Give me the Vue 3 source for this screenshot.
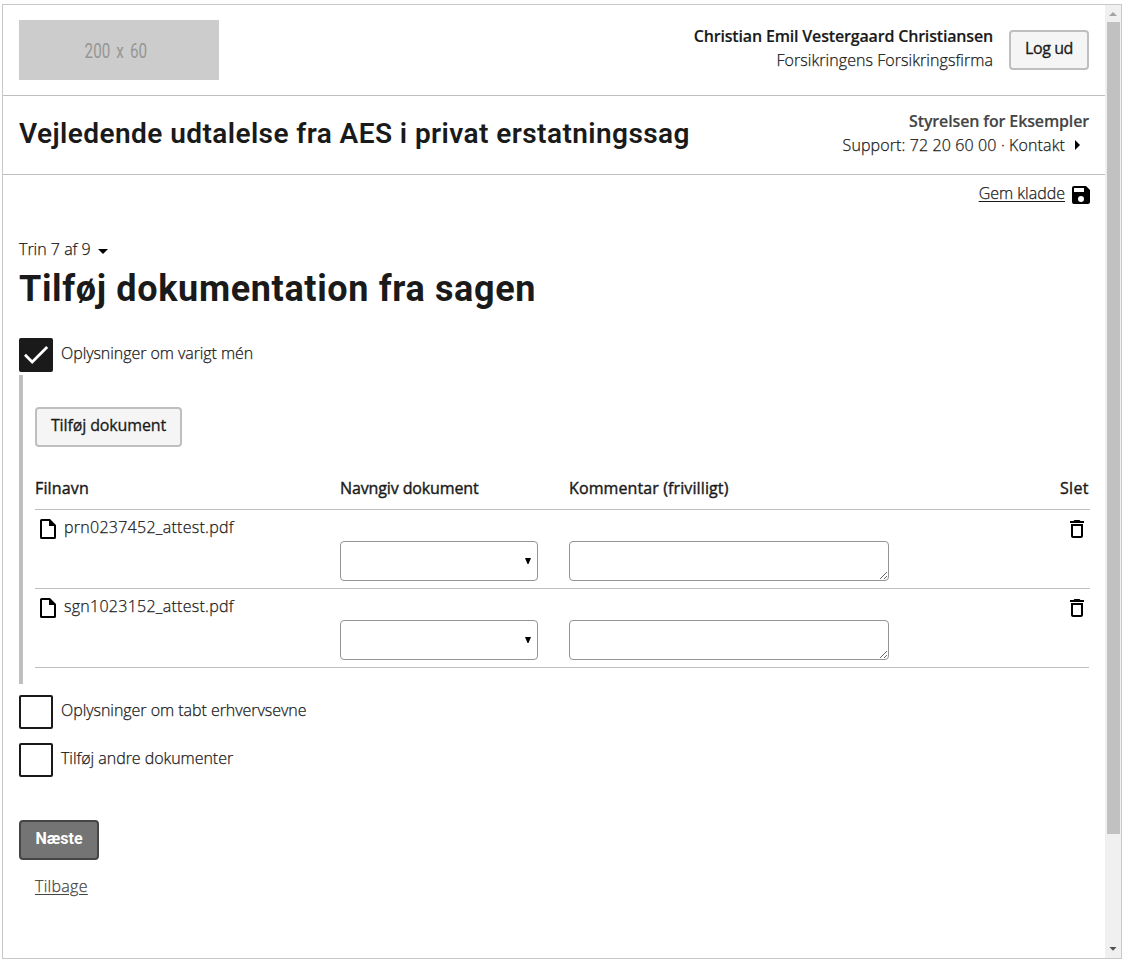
<script setup>
import { ref } from 'vue'

const files = ref([
  { name: 'prn0237452_attest.pdf', type: '', comment: '' },
  { name: 'sgn1023152_attest.pdf', type: '', comment: '' },
])
</script>

<template>
  <div class="window">
    <div class="page">
      <header class="top">
        <div class="logo"><span>200 x 60</span></div>
        <div class="user">
          <div class="name">Christian Emil Vestergaard Christiansen</div>
          <div class="firm">Forsikringens Forsikringsfirma</div>
        </div>
        <button class="btn logout" type="button">Log ud</button>
      </header>

      <div class="solution">
        <h2>Vejledende udtalelse fra AES i privat erstatningssag</h2>
        <div class="authority">
          <div class="agency">Styrelsen for Eksempler</div>
          <div class="support">
            <span>Support: 72 20 60 00 · Kontakt</span>
            <svg width="24" height="24" viewBox="0 0 24 24"><path d="M10 17l5-5-5-5z" /></svg>
          </div>
        </div>
      </div>

      <div class="draft">
        <a>Gem kladde</a>
        <svg width="24" height="24" viewBox="0 0 24 24"><path d="M17 3H5a2 2 0 0 0-2 2v14a2 2 0 0 0 2 2h14c1.1 0 2-.9 2-2V7l-4-4zm-5 16a3 3 0 1 1 0-6 3 3 0 0 1 0 6zm3-10H5V5h10v4z" /></svg>
      </div>

      <main>
        <div class="step">
          <span>Trin 7 af 9</span>
          <svg width="24" height="24" viewBox="0 0 24 24"><path d="M7 10l5 5 5-5z" /></svg>
        </div>
        <h1>Tilføj dokumentation fra sagen</h1>

        <div class="check">
          <span class="box checked">
            <svg width="34" height="34" viewBox="0 0 34 34"><path d="M6 16.8l7.2 7.2L28.2 9" fill="none" stroke="#fff" stroke-width="2.8" /></svg>
          </span>
          <span class="label varigt">Oplysninger om varigt mén</span>
        </div>

        <section class="panel">
          <button class="btn add" type="button">Tilføj dokument</button>
          <div class="table">
            <div class="row head">
              <span class="h-file">Filnavn</span>
              <span class="h-name">Navngiv dokument</span>
              <span class="h-comment">Kommentar (frivilligt)</span>
              <span class="h-del">Slet</span>
            </div>
            <div v-for="f in files" :key="f.name" class="row">
              <div class="file">
                <svg width="24" height="24" viewBox="0 0 24 24"><path fill-rule="evenodd" d="M14 2H5.6A1.6 1.6 0 0 0 4 3.600V20.400A1.600 1.600 0 0 0 5.600 22h12.800a1.600 1.600 0 0 0 1.600-1.600V8zM6 20V4h7v5h5v11z" /></svg>
                <span>{{ f.name }}</span>
              </div>
              <div class="select">
                <select v-model="f.type"><option value=""></option></select>
                <svg width="6" height="6" viewBox="0 0 6 6"><path d="M0 0h6L3.500 6h-1z" /></svg>
              </div>
              <textarea v-model="f.comment"></textarea>
              <svg class="trash" width="24" height="24" viewBox="0 0 24 24"><path fill-rule="evenodd" d="M6 19c0 1.100.9 2 2 2h8c1.100 0 2-.9 2-2V7H6zM8 9h8v10H8zm7.500-5l-1-1h-5l-1 1H5v2h14V4z" /></svg>
            </div>
          </div>
        </section>

        <div class="check second">
          <span class="box"></span><span class="label">Oplysninger om tabt erhvervsevne</span>
        </div>
        <div class="check third">
          <span class="box"></span><span class="label">Tilføj andre dokumenter</span>
        </div>

        <button class="btn next" type="button">Næste</button>
        <a class="back">Tilbage</a>
      </main>
    </div>
    <div class="scrollbar">
      <svg width="16" height="17" viewBox="0 0 16 17"><path d="M4 11h8L8 7z" fill="#a3a3a3" /></svg>
      <div class="thumb"></div>
      <svg class="down" width="16" height="17" viewBox="0 0 16 17"><path d="M4.500 6h7L8 9.800z" fill="#505050" /></svg>
    </div>
  </div>
</template>

<style>
body { background: #fff; overflow: hidden; }
</style>

<style scoped>
.window {
  box-sizing: border-box;
  width: 1120px;
  height: 955px;
  margin: 4px 0 0 2px;
  border: 1px solid #c8c8c8;
  display: flex;
  color: #1a1a1a;
  font: 300 16px/24px "Open Sans", "Noto Sans", sans-serif;
  -webkit-text-stroke: 0.25px currentColor;
}
.page { width: 1102px; }
svg { display: block; flex: none; }
.top {
  box-sizing: border-box;
  height: 91px;
  padding: 15px 16px 0;
  border-bottom: 1px solid #bfbfbf;
  display: flex;
  align-items: flex-start;
}
.logo {
  width: 200px;
  height: 60px;
  background: #ccc;
  color: #969696;
  display: flex;
  align-items: center;
  justify-content: center;
  font: 400 19.5px/24px Roboto, sans-serif;
  word-spacing: 3px;
  -webkit-text-stroke: 0;
}
.logo span { transform: scaleX(0.78); padding: 3px 7px 0 0; }
.user { margin-left: auto; padding-top: 4px; text-align: right; }
.name { font-weight: 600; letter-spacing: -0.17px; -webkit-text-stroke: 0.15px currentColor; }
.firm { letter-spacing: 0.06px; }
.btn {
  box-sizing: border-box;
  height: 40px;
  padding: 0 0 4px;
  border: 2px solid #bfbfbf;
  border-radius: 4px;
  background: #f5f5f5;
  color: #1a1a1a;
  font: 400 16px/24px "Open Sans", "Noto Sans", sans-serif;
  -webkit-text-stroke: 0.3px currentColor;
  white-space: nowrap;
  display: block;
}
.logout { width: 80px; margin: 10px 0 0 16px; letter-spacing: -0.4px; }
.solution {
  box-sizing: border-box;
  height: 79px;
  padding: 13px 16px 0 16px;
  border-bottom: 1px solid #bfbfbf;
  display: flex;
  justify-content: space-between;
}
h1, h2 { margin: 0; font-family: Roboto, sans-serif; white-space: nowrap; -webkit-text-stroke: 0; }
h2 { font-size: 28px; line-height: 36px; font-weight: 600; letter-spacing: 0.43px; padding-top: 7px; }
.authority { text-align: right; }
.agency { font-weight: 600; color: #454545; letter-spacing: -0.14px; -webkit-text-stroke: 0.15px currentColor; }
.support { display: flex; justify-content: flex-end; letter-spacing: 0.12px; }
.draft { display: flex; height: 32px; padding: 6px 12px 0 0; justify-content: flex-end; gap: 4px; }
.draft svg { margin-top: 2px; }
a { text-decoration: underline; text-underline-offset: 2px; }
main { padding: 24px 15px 0 16px; }
.step { display: flex; height: 24px; }
.step svg { margin-top: 2px; }
h1 { font-size: 36px; line-height: 48px; height: 77px; font-weight: 700; letter-spacing: 0.64px; padding-top: 4px; box-sizing: border-box; }
.check { display: flex; height: 34px; gap: 8px; }
.box { box-sizing: border-box; width: 34px; height: 34px; border: 2px solid #1a1a1a; border-radius: 2px; flex: none; }
.box.checked { background: #1a1a1a; border: 0; }
.label { padding-top: 3px; letter-spacing: -0.04px; }
.label.varigt { letter-spacing: -0.06px; }
.panel {
  box-sizing: border-box;
  height: 309px;
  margin-top: 3px;
  border-left: 4px solid #bfbfbf;
  padding: 32px 0 0 12px;
}
.add { width: 147px; letter-spacing: -0.12px; }
.row {
  box-sizing: border-box;
  height: 79px;
  border-bottom: 1px solid #bfbfbf;
  display: grid;
  grid-template-columns: 305px 229px 1fr 30px;
  align-items: start;
}
.row:last-child { margin-right: 1px; grid-template-columns: 305px 229px 1fr 29px; }
.row.head { height: 63px; padding-top: 29px; font-weight: 400; -webkit-text-stroke: 0.4px currentColor; }
.h-file { letter-spacing: 0.16px; }
.h-name { letter-spacing: -0.12px; }
.h-comment { letter-spacing: 0.11px; }
.h-del { letter-spacing: 0.3px; }
.file { display: flex; padding: 5px 0 0 1px; gap: 4px; letter-spacing: 0.27px; }
.file svg { margin-top: 2px; }
.select { position: relative; width: 198px; height: 40px; margin-top: 31px; }
select, textarea {
  box-sizing: border-box;
  height: 40px;
  margin: 0;
  border: 1px solid #949494;
  border-radius: 4px;
  background: #fff;
  display: block;
}
select { width: 198px; appearance: none; }
.select svg { position: absolute; right: 7px; top: 17px; }
textarea { width: 320px; margin-top: 31px; }
.trash { margin: 7px 0 0 5px; }
.second { margin-top: 11px; }
.third { margin-top: 14px; }
.next {
  width: 80px;
  margin-top: 43px;
  padding-bottom: 2px;
  border-color: #454545;
  background: #747474;
  color: #fff;
  font-family: Roboto, sans-serif;
  font-weight: 700;
  -webkit-text-stroke: 0;
}
.back { display: block; width: fit-content; margin: 14px 0 0 16px; color: #454545; letter-spacing: 0.3px; }
.scrollbar { width: 16px; background: #f0f0f0; display: flex; flex-direction: column; }
.thumb { width: 13px; height: 812px; margin-left: 2px; background: #c1c1c1; }
.down { margin-top: auto; }
</style>
